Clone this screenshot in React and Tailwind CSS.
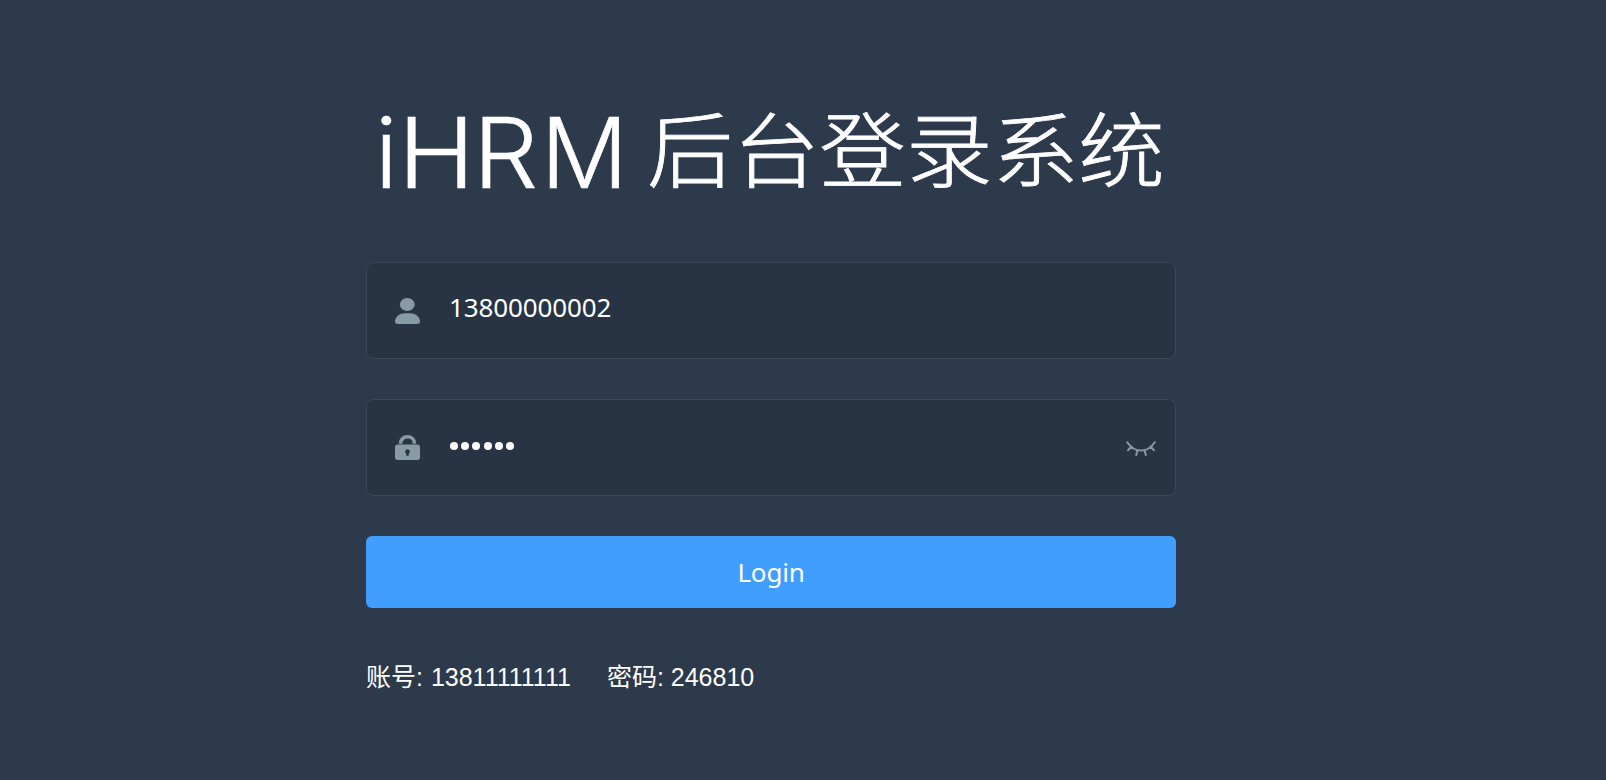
const UserIcon = () => (
  <svg width="25" height="26" viewBox="0 0 25 26" fill="#889aa4" aria-hidden="true">
    <ellipse cx="12.3" cy="6.5" rx="7.4" ry="6.5" />
    <path d="M0 23.5C0 18.5 5 15.2 10 15.2H15C20 15.2 25 18.5 25 23.5Q25 26 22 26H3Q0 26 0 23.5Z" />
  </svg>
);

const LockIcon = () => (
  <svg width="25" height="25" viewBox="0 0 25 25" aria-hidden="true">
    <path d="M5.6 8.8V8.2C5.6 4.4 8.6 1.8 12.5 1.8S19.4 4.4 19.4 8.2V8.8" fill="none" stroke="#889aa4" strokeWidth="3.6" />
    <path fill="#889aa4" fillRule="evenodd" d="M3 9.5H22Q25 9.5 25 12.3V22.2Q25 25 22 25H3Q0 25 0 22.2V12.3Q0 9.5 3 9.5ZM12.5 14.3A2.5 2.3 0 0 0 11.2 18.5V20.8H13.8V18.5A2.5 2.3 0 0 0 12.5 14.3Z" />
  </svg>
);

const ClosedEyeIcon = () => (
  <svg width="30" height="16" viewBox="0 0 30 16" fill="none" stroke="#889aa4" strokeWidth="2" strokeLinecap="round" aria-hidden="true">
    <path d="M1.2 1.2C4.5 6 9 9.6 15 9.6S25.5 6 28.8 1.2M5.2 5.6L2 9.3M24.8 5.6L28 9.3M11.4 9.4L10.2 14M18.6 9.4L19.8 14" />
  </svg>
);

const Field = ({ icon, children }) => (
  <div className="flex h-[97px] items-center rounded-[8px] border border-[#3c4857] bg-[#283443] pl-7">
    {icon}
    {children}
  </div>
);

export default function App() {
  return (
    <div className="h-[780px] bg-[#2d3a4b] pl-[366px] pt-[101px] font-['Noto_Sans','Noto_Sans_CJK_SC',sans-serif] text-white">
      <main className="w-[810px]">
        <h1 className="flex h-[99px] items-center whitespace-nowrap pl-[9px] font-light leading-[98px]">
          <span className="flex w-[272px] pt-[5px] font-['Inter',sans-serif] text-[97px] [-webkit-text-stroke:0.5px_white]">
            <span>i</span>
            <span className="w-[75px] origin-left scale-x-[1.07]">H</span>
            <span className="w-[68px] origin-left scale-x-[1.06]">R</span>
            <span>M</span>
          </span>
          <span className="origin-top scale-y-[0.95] pb-[5px] font-['Noto_Sans_CJK_SC',sans-serif] text-[86.3px] [-webkit-text-stroke:0.9px_white]">后台登录系统</span>
        </h1>
        <form className="mt-[62px] flex flex-col gap-10">
          <Field icon={<UserIcon />}>
            <span className="ml-[29px] -mt-1.5 text-[26px] tracking-[-0.12px]">13800000002</span>
          </Field>
          <Field icon={<LockIcon />}>
            <span className="ml-[30px] flex gap-[3.2px] -mt-1" aria-label="password">
              {[0, 1, 2, 3, 4, 5].map((n) => (
                <span key={n} className="size-2 rounded-full bg-white" />
              ))}
            </span>
            <span className="ml-auto mr-[19px] mt-0.5"><ClosedEyeIcon /></span>
          </Field>
          <button type="button" className="h-[72px] rounded-[6px] bg-[#409eff] text-[26px] tracking-[-0.2px]">Login</button>
        </form>
        <p className="mt-[51px] flex gap-9 whitespace-pre font-['Liberation_Sans','Noto_Sans_CJK_SC',sans-serif] text-[25px] leading-9">
          <span>账号: <span className="ml-px">13811111111</span></span>
          <span>密码: 246810</span>
        </p>
      </main>
    </div>
  );
}
